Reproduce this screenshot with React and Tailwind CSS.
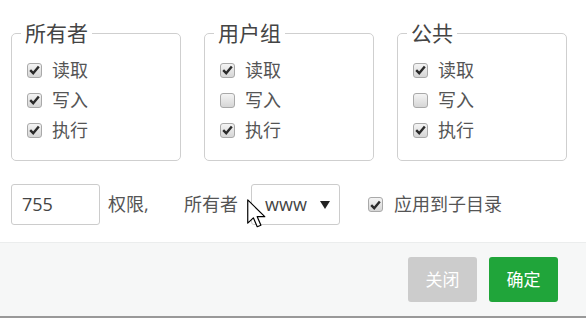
import React from "react";

const font = { fontFamily: '"Open Sans", "Noto Sans CJK SC", sans-serif' };

function Box({ checked }) {
  return (
    <span className="inline-flex h-[15px] w-[15px] shrink-0 items-center justify-center rounded-[3px] border border-[#a9a9a9] bg-gradient-to-b from-[#f4f4f4] to-[#d6d6d6]">
      {checked && (
        <svg width="11" height="10" viewBox="0 0 11 10">
          <path d="M1.2 5.2 L4.2 8.2 L9.8 1.4" fill="none" stroke="#2b2b2b" strokeWidth="2.4" />
        </svg>
      )}
    </span>
  );
}

function Group({ title, perms }) {
  const names = ["读取", "写入", "执行"];
  return (
    <fieldset className="m-0 h-[142px] w-[170px] rounded-[5px] border-[1.5px] border-[#cfcfcf] p-0">
      <legend className="ml-[9px] px-[4px] text-[21px] leading-[28px] text-[#444]">{title}</legend>
      <div className="flex flex-col pl-[15px] pt-[8px]">
        {names.map((n, i) => (
          <label key={n} className="flex h-[30px] items-center gap-[10px] text-[18px] text-[#555]">
            <Box checked={perms[i]} />
            <span>{n}</span>
          </label>
        ))}
      </div>
    </fieldset>
  );
}

export default function App() {
  return (
    <div className="relative h-[319px] w-[586px] overflow-hidden bg-white" style={font}>
      <div className="flex gap-[23px] pl-[11px] pt-[19px]">
        <Group title="所有者" perms={[true, true, true]} />
        <Group title="用户组" perms={[true, false, true]} />
        <Group title="公共" perms={[true, false, true]} />
      </div>

      <div className="mt-[23px] flex h-[41px] items-center pl-[11px] text-[18px] text-[#555]">
        <div className="flex h-[41px] w-[89px] shrink-0 items-center rounded-[3px] border-[1.5px] border-[#ccc] pl-[10px] text-[18px] text-[#444]">
          755
        </div>
        <span className="ml-[8px] w-[45px] shrink-0">权限,</span>
        <span className="ml-[31px] shrink-0">所有者</span>
        <div className="ml-[13px] flex h-[41px] w-[89px] shrink-0 items-center justify-between rounded-[3px] border-[1.5px] border-[#ccc] pl-[13px] pr-[9px] text-[18px] text-[#444]">
          <span>www</span>
          <svg width="10" height="8" viewBox="0 0 10 8">
            <path d="M0 0 L10 0 L5 8 Z" fill="#222" />
          </svg>
        </div>
        <label className="ml-[28px] flex shrink-0 items-center gap-[11px]">
          <Box checked />
          <span>应用到子目录</span>
        </label>
      </div>

      <div className="mt-[17px] flex h-[74px] items-center justify-end gap-[12px] border-t border-[#ebeded] bg-[#f6f7f7] pr-[28px]">
        <button className="h-[45px] w-[69px] rounded-[3px] bg-[#cccccc] text-[17px] text-white">关闭</button>
        <button className="h-[45px] w-[69px] rounded-[3px] bg-[#20a53a] text-[17px] text-white">确定</button>
      </div>
      <div className="h-[2px] bg-[#999]" />

      <svg className="absolute left-[247px] top-[199px]" width="20" height="30" viewBox="0 0 13.5 20">
        <path d="M0.5 0.5 L0.5 16.2 L4.3 12.6 L6.9 18.6 L9.4 17.6 L6.9 11.8 L12 11.8 Z" fill="#fff" stroke="#000" strokeWidth="0.8" strokeLinejoin="round" />
      </svg>
    </div>
  );
}
